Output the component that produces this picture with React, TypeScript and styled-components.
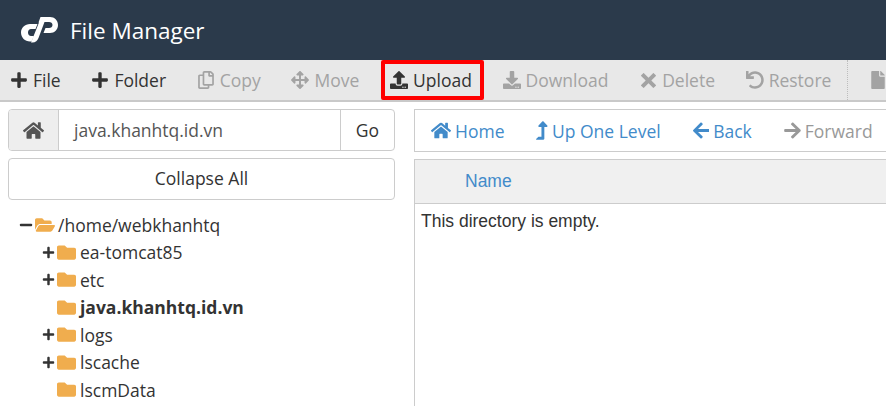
import * as React from "react"
import styled, {createGlobalStyle} from "styled-components"
import {
    FaArrowLeft,
    FaArrowRight,
    FaArrowsAlt,
    FaDownload,
    FaFile,
    FaFolder,
    FaFolderOpen,
    FaHome,
    FaLevelUpAlt,
    FaMinus,
    FaPlus,
    FaRegCopy,
    FaUndo,
    FaUpload,
} from "react-icons/fa"
import {ImCross} from "react-icons/im"

const GlobalStyle = createGlobalStyle`
    html, body {
        margin: 0;
        height: 100%;
        overflow: hidden;
        background: #fff;
    }
    body {
        font-family: "Open Sans", "Liberation Sans", sans-serif;
        color: #333;
    }
`

const Header = styled.header`
    height: 60px;
    background: #2b3a4b;
    display: flex;
    align-items: center;
    padding-left: 21px;
    gap: 12px;
    color: #fff;
    font-size: 22.5px;
`

const Toolbar = styled.div`
    height: 42px;
    box-sizing: border-box;
    background: #e8e8e8;
    border-bottom: 2px solid #c9c9c9;
    display: flex;
    align-items: center;
    padding-left: 10px;
    gap: 30.7px;
    white-space: nowrap;
    overflow: hidden;
`

const ToolButton = styled.div<{ $disabled?: boolean; $marked?: boolean }>`
    position: relative;
    display: flex;
    align-items: center;
    gap: 5px;
    font-size: 17.5px;
    color: ${(p) => (p.$disabled ? "#a3a3a3" : "#333")};

    svg {
        font-size: 18px;
        flex: none;
    }

    ${(p) =>
        p.$marked &&
        `&::after {
            content: "";
            position: absolute;
            left: -9px;
            right: -12px;
            top: 50%;
            transform: translateY(-50%);
            height: 40px;
            box-sizing: border-box;
            border: 4px solid #f00;
            border-radius: 2px;
        }`}
`

const DeleteGlyph = styled(ImCross)`
    && {
        font-size: 15px;
        margin: 0 1.5px;
    }
`

const ToolDivider = styled.div`
    width: 0;
    height: 40px;
    border-left: 1px dotted #bdbdbd;
    margin-left: -14.7px;
    margin-right: -9.7px;
`

const Body = styled.div`
    display: grid;
    grid-template-columns: 387px 1fr;
    column-gap: 19px;
    padding: 7px 0 0 8px;
    height: 304px;
    box-sizing: border-box;
`

const Sidebar = styled.div`
    display: flex;
    flex-direction: column;
    gap: 7px;
`

const PathBar = styled.div`
    height: 42px;
    box-sizing: border-box;
    display: flex;
    border: 1px solid #ccc;
    border-radius: 4px;
    overflow: hidden;
    font-size: 17.5px;
`

const HomeAddon = styled.div`
    width: 49px;
    background: #eee;
    border-right: 1px solid #ccc;
    display: flex;
    align-items: center;
    justify-content: center;
    color: #555;
    font-size: 21px;
`

const PathValue = styled.div`
    flex: 1;
    display: flex;
    align-items: center;
    padding-left: 15px;
    color: #555;
`

const GoButton = styled.div`
    width: 53px;
    border-left: 1px solid #ccc;
    display: flex;
    align-items: center;
    justify-content: center;
`

const CollapseButton = styled.div`
    height: 42px;
    box-sizing: border-box;
    border: 1px solid #ccc;
    border-radius: 4px;
    padding-bottom: 2px;
    display: flex;
    align-items: center;
    justify-content: center;
    font-size: 17.5px;
`

const Tree = styled.ul`
    list-style: none;
    margin: 0;
    padding: 4px 0 0 0;
`

const TreeRow = styled.li<{ $depth: number; $bold?: boolean }>`
    height: 27.5px;
    display: flex;
    align-items: center;
    padding-left: ${(p) => (p.$depth === 0 ? 10.5 : 33)}px;
    font-size: 17.5px;
    font-weight: ${(p) => (p.$bold ? 700 : 400)};
    color: #333;
`

const Toggle = styled.span<{ $open?: boolean }>`
    width: 15px;
    display: flex;
    align-items: center;
    justify-content: center;
    font-size: ${(p) => (p.$open ? 14 : 13)}px;
    color: #333;
`

const FolderIcon = styled.span<{ $open?: boolean }>`
    display: flex;
    margin-left: ${(p) => (p.$open ? 1.500 : 1)}px;
    margin-right: ${(p) => (p.$open ? 3 : 4)}px;
    color: #f0ad4e;
    font-size: ${(p) => (p.$open ? 20 : 19)}px;
`

const Content = styled.div`
    display: flex;
    flex-direction: column;
    gap: 7px;
    min-width: 0;
`

const NavBar = styled.div`
    height: 43px;
    box-sizing: border-box;
    border: 1px solid #ccc;
    border-right: none;
    display: flex;
    align-items: center;
    padding-left: 16px;
    gap: 32px;
    white-space: nowrap;
    overflow: hidden;
`

const NavLink = styled.div<{ $disabled?: boolean; $iconWidth: number }>`
    display: flex;
    align-items: center;
    gap: 4px;
    font-size: 17.5px;
    color: ${(p) => (p.$disabled ? "#999" : "#428bca")};

    svg {
        width: ${(p) => p.$iconWidth}px;
        height: 19px;
        flex: none;
    }
`

const Listing = styled.div`
    flex: 1;
    border-left: 1px solid #ccc;
    border-top: 1px solid #ccc;
    font-family: "Liberation Sans", Arial, sans-serif;
    font-size: 17.5px;
`

const ListingHead = styled.div`
    height: 44px;
    box-sizing: border-box;
    background: #f0f0f0;
    border-bottom: 1px solid #ccc;
    display: flex;
    align-items: center;
    padding-left: 50px;
    color: #428bca;
`

const EmptyNote = styled.div`
    padding: 7px 6px;
    color: #333;
`

const CpanelLogo = () => (
    <svg width="37" height="26" viewBox="0 0 37 26" fill="#fff" aria-label="cPanel">
        <path d="M9 7H16.500L14.500 12H10C8.300 12 7 13.500 7 15.500C7 17.500 8.300 19 10 19H13L10.500 24.500H9C4 24.500 0 20.500 0 15.500C0 10.700 4 7 9 7Z" />
        <path d="M19.500 0H29C33.500 0 37 3.500 37 8C37 12.500 33.500 16 29 16H22.500L24.500 11H28C30 11 31.500 9.700 31.500 8C31.500 6.300 30 5 28 5H23.500L17.500 21C16.500 23.700 14.500 25.500 11.500 25.500H10L18 5.500H17.500Z" />
    </svg>
)

const tools = [
    {label: "File", icon: <FaPlus />},
    {label: "Folder", icon: <FaPlus />},
    {label: "Copy", icon: <FaRegCopy />, disabled: true},
    {label: "Move", icon: <FaArrowsAlt />, disabled: true},
    {label: "Upload", icon: <FaUpload />, marked: true},
    {label: "Download", icon: <FaDownload />, disabled: true},
    {label: "Delete", icon: <DeleteGlyph />, disabled: true},
    {label: "Restore", icon: <FaUndo />, disabled: true},
]

const folders = [
    {name: "ea-tomcat85", expandable: true},
    {name: "etc", expandable: true},
    {name: "java.khanhtq.id.vn", bold: true},
    {name: "logs", expandable: true},
    {name: "lscache", expandable: true},
    {name: "lscmData"},
]

export default function App() {
    return (
        <>
            <GlobalStyle />
            <Header>
                <CpanelLogo />
                <span>File Manager</span>
            </Header>
            <Toolbar>
                {tools.map((tool) => (
                    <ToolButton key={tool.label} $disabled={tool.disabled} $marked={tool.marked}>
                        {tool.icon}
                        {tool.label}
                    </ToolButton>
                ))}
                <ToolDivider />
                <ToolButton $disabled>
                    <FaFile />
                </ToolButton>
            </Toolbar>
            <Body>
                <Sidebar>
                    <PathBar>
                        <HomeAddon>
                            <FaHome />
                        </HomeAddon>
                        <PathValue>java.khanhtq.id.vn</PathValue>
                        <GoButton>Go</GoButton>
                    </PathBar>
                    <CollapseButton>Collapse All</CollapseButton>
                    <Tree>
                        <TreeRow $depth={0}>
                            <Toggle $open>
                                <FaMinus />
                            </Toggle>
                            <FolderIcon $open>
                                <FaFolderOpen />
                            </FolderIcon>
                            /home/webkhanhtq
                        </TreeRow>
                        {folders.map((folder) => (
                            <TreeRow key={folder.name} $depth={1} $bold={folder.bold}>
                                <Toggle>{folder.expandable && <FaPlus />}</Toggle>
                                <FolderIcon>
                                    <FaFolder />
                                </FolderIcon>
                                {folder.name}
                            </TreeRow>
                        ))}
                    </Tree>
                </Sidebar>
                <Content>
                    <NavBar>
                        <NavLink $iconWidth={20}>
                            <FaHome />
                            Home
                        </NavLink>
                        <NavLink $iconWidth={11.5}>
                            <FaLevelUpAlt />
                            Up One Level
                        </NavLink>
                        <NavLink $iconWidth={16.5}>
                            <FaArrowLeft />
                            Back
                        </NavLink>
                        <NavLink $disabled $iconWidth={17}>
                            <FaArrowRight />
                            Forward
                        </NavLink>
                    </NavBar>
                    <Listing>
                        <ListingHead>Name</ListingHead>
                        <EmptyNote>This directory is empty.</EmptyNote>
                    </Listing>
                </Content>
            </Body>
        </>
    )
}
